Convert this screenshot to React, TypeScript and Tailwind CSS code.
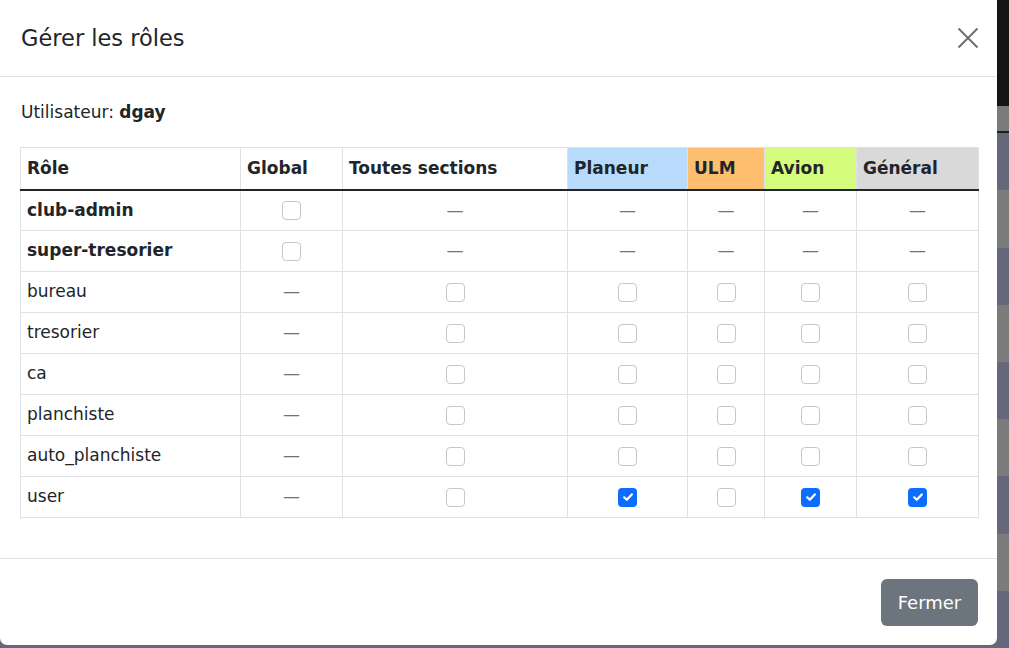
import React from "react";

type Cell = "box" | "checked" | "dash";

interface RoleRow {
  name: string;
  bold?: boolean;
  cells: Cell[];
}

const ROWS: RoleRow[] = [
  { name: "club-admin", bold: true, cells: ["box", "dash", "dash", "dash", "dash", "dash"] },
  { name: "super-tresorier", bold: true, cells: ["box", "dash", "dash", "dash", "dash", "dash"] },
  { name: "bureau", cells: ["dash", "box", "box", "box", "box", "box"] },
  { name: "tresorier", cells: ["dash", "box", "box", "box", "box", "box"] },
  { name: "ca", cells: ["dash", "box", "box", "box", "box", "box"] },
  { name: "planchiste", cells: ["dash", "box", "box", "box", "box", "box"] },
  { name: "auto_planchiste", cells: ["dash", "box", "box", "box", "box", "box"] },
  { name: "user", cells: ["dash", "box", "checked", "box", "checked", "checked"] },
];

const HEADERS = [
  { label: "Rôle", w: "w-[220px]", bg: "" },
  { label: "Global", w: "w-[102px]", bg: "" },
  { label: "Toutes sections", w: "w-[225px]", bg: "" },
  { label: "Planeur", w: "w-[120px]", bg: "bg-[#b8dbfb]" },
  { label: "ULM", w: "w-[77px]", bg: "bg-[#fdbf6f]" },
  { label: "Avion", w: "w-[92px]", bg: "bg-[#d5fc7d]" },
  { label: "Général", w: "w-[122px]", bg: "bg-[#d9d9d9]" },
];

function CheckCell({ kind }: { kind: Cell }) {
  if (kind === "dash") {
    return <span className="text-[#6c757d]">—</span>;
  }
  if (kind === "checked") {
    return (
      <span className="inline-flex h-[19px] w-[19px] items-center justify-center rounded-[4px] bg-[#0d6efd] align-middle">
        <svg width="12" height="12" viewBox="0 0 12 12">
          <polyline
            points="2.2,6.3 4.8,8.8 9.8,3.4"
            fill="none"
            stroke="white"
            strokeWidth="2.2"
            strokeLinecap="round"
            strokeLinejoin="round"
          />
        </svg>
      </span>
    );
  }
  return (
    <span className="inline-block h-[19px] w-[19px] rounded-[4px] border border-[#c4c7cb] bg-white align-middle" />
  );
}

function Backdrop() {
  const stripes = Array.from({ length: 9 }, (_, i) => i);
  return (
    <div className="flex h-full w-full flex-col bg-[#65687a]">
      <div className="h-[107px] bg-[#141414]" />
      <div className="h-[26px] bg-[#7b7b7b]" />
      <div className="h-[2px] bg-[#1e1e1e]" />
      {stripes.map((i) => (
        <div key={i} className={i % 2 === 0 ? "h-[58px] bg-[#65687a]" : "h-[58px] bg-[#7b7b7b]"} />
      ))}
    </div>
  );
}

export default function App() {
  return (
    <div
      className="relative h-[648px] w-[1009px] overflow-hidden text-[#212529]"
      style={{ fontFamily: '"DejaVu Sans", "Noto Sans", sans-serif' }}
    >
      <Backdrop />

      <div className="absolute left-0 top-0 flex h-[645px] w-[997px] flex-col rounded-b-[7px] bg-white">
        <div className="flex h-[77px] items-center justify-between border-b border-[#dee2e6] pl-[21px] pr-[18px]">
          <h5 className="text-[22.5px] font-normal leading-none">Gérer les rôles</h5>
          <svg width="22" height="22" viewBox="0 0 22 22" className="text-[#6b6b6b]">
            <path d="M1.5 1.5 L20.5 20.5 M20.5 1.5 L1.5 20.5" stroke="currentColor" strokeWidth="1.8" />
          </svg>
        </div>

        <div className="flex-1 pl-[20px] pr-[19px]">
          <p className="mt-[23px] text-[17px] leading-[24px]">
            <span className="pl-[1px]">Utilisateur: </span>
            <b className="font-semibold">dgay</b>
          </p>

          <table className="mt-[23px] w-[958px] table-fixed border-collapse text-[17px]">
            <thead>
              <tr className="h-[42px]">
                {HEADERS.map((h) => (
                  <th
                    key={h.label}
                    className={`${h.w} ${h.bg} border border-b-2 border-[#dee2e6] border-b-[#212529] px-[6px] text-left font-semibold`}
                  >
                    {h.label}
                  </th>
                ))}
              </tr>
            </thead>
            <tbody>
              {ROWS.map((r) => (
                <tr key={r.name} className="h-[41px]">
                  <td className={`border border-[#dee2e6] px-[6px] ${r.bold ? "font-semibold" : ""}`}>{r.name}</td>
                  {r.cells.map((c, i) => (
                    <td key={i} className="border border-[#dee2e6] text-center">
                      <CheckCell kind={c} />
                    </td>
                  ))}
                </tr>
              ))}
            </tbody>
          </table>
        </div>

        <div className="flex h-[87px] items-start justify-end border-t border-[#dee2e6] pr-[19px] pt-[20px]">
          <button className="h-[47px] w-[97px] rounded-[6px] bg-[#6c757d] text-[18px] text-white">Fermer</button>
        </div>
      </div>
    </div>
  );
}
